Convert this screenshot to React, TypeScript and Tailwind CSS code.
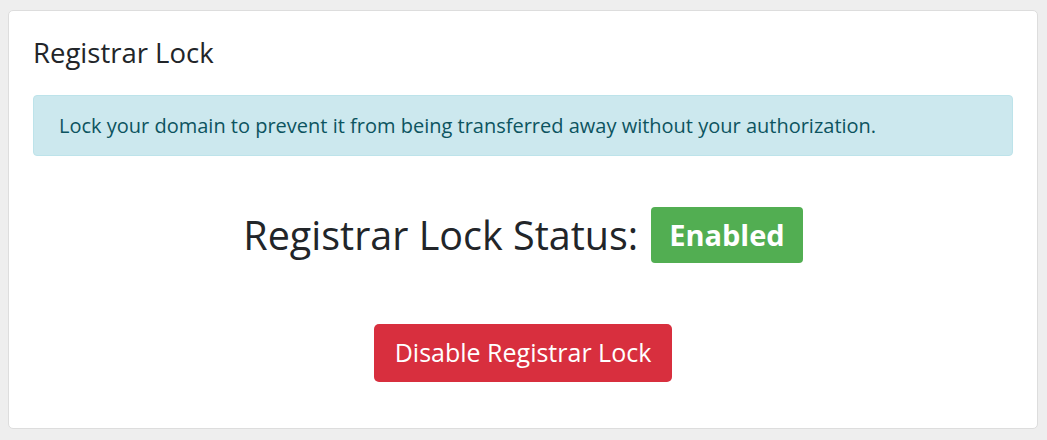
export default function App() {
  return (
    <div className="min-h-[440px] w-full bg-[#eeeeee] pt-[10px] pl-[8px] pr-[10px]" style={{ fontFamily: '"Open Sans", sans-serif' }}>
      <div className="h-[419px] w-[1030px] rounded-[5px] border border-[#dddddd] bg-white px-[24px] pt-[24px]">
        <h2 className="text-[27.5px] leading-[36px] text-[#222529]">Registrar Lock</h2>
        <div className="mt-[24px] h-[61px] rounded-[4px] border border-[#bde3ea] bg-[#cce8ee] px-[25px] flex items-center text-[20px] text-[#0c5460]">
          Lock your domain to prevent it from being transferred away without your authorization.
        </div>
        <div className="mt-[51px] flex items-center justify-center gap-[13px]">
          <span className="text-[39.5px] leading-[48px] text-[#222529]">Registrar Lock Status:</span>
          <span className="flex h-[56px] items-center rounded-[4px] bg-[#52ae52] px-[18px] text-[29px] font-bold text-white">Enabled</span>
        </div>
        <div className="mt-[61px] flex justify-center">
          <button className="h-[58px] rounded-[5px] bg-[#d82f3e] px-[21px] text-[25px] text-white">Disable Registrar Lock</button>
        </div>
      </div>
    </div>
  );
}
